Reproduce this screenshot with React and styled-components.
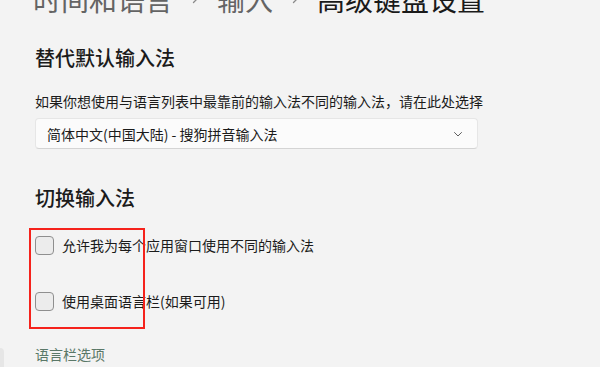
import styled, { createGlobalStyle } from 'styled-components';

const GlobalStyle = createGlobalStyle`
  html, body {
    margin: 0;
    padding: 0;
    background: #f3f3f3;
  }
  body {
    font-family: "Noto Sans CJK SC", "Noto Sans", sans-serif;
    color: #1b1b1b;
    overflow: hidden;
  }
`;

const Page = styled.div`
  position: relative;
  width: 600px;
  height: 367px;
  box-sizing: border-box;
  padding-left: 35px;
  overflow: hidden;
  display: flex;
  flex-direction: column;
  align-items: flex-start;
`;

const Breadcrumb = styled.div`
  display: flex;
  align-items: center;
  margin: -15px 0 0 -2px;
  height: 28px;
  font-size: 28px;
  line-height: 28px;
  white-space: nowrap;
`;

const Crumb = styled.span`
  color: ${(props) => (props.current ? '#1a1a1a' : '#646464')};
`;

const Sep = styled.span`
  width: 44px;
  display: flex;
  justify-content: center;
  align-items: center;
`;

const SectionTitle = styled.h2`
  margin: ${(props) => props.top}px 0 0 0;
  font-size: 20px;
  line-height: 28px;
  font-weight: 500;
  color: #1b1b1b;
`;

const Description = styled.p`
  margin: 19px 0 0 0;
  font-size: 14px;
  line-height: 20px;
  color: #1b1b1b;
`;

const Select = styled.div`
  margin-top: 7px;
  width: 443px;
  height: 31px;
  box-sizing: border-box;
  padding: 0 14px 0 11px;
  display: flex;
  align-items: center;
  justify-content: space-between;
  background: #fbfbfb;
  border: 1px solid #e6e6e6;
  border-bottom-color: #d4d4d4;
  border-radius: 4px;
  font-size: 14px;
  color: #1b1b1b;
`;

const CheckGroup = styled.div`
  position: relative;
  margin-top: 23px;
  display: flex;
  flex-direction: column;
  gap: 36px;
`;

const Highlight = styled.div`
  position: absolute;
  left: -6px;
  top: -7px;
  width: 116px;
  height: 101px;
  border: 2px solid #f5221b;
  box-sizing: border-box;
  pointer-events: none;
`;

const CheckRow = styled.label`
  display: flex;
  align-items: center;
  gap: 8px;
  height: 20px;
  font-size: 14px;
  line-height: 20px;
  color: #1b1b1b;
`;

const Box = styled.span`
  width: 19px;
  height: 19px;
  box-sizing: border-box;
  border: 1px solid #8f8f8f;
  border-radius: 4px;
  background: #ececec;
  flex-shrink: 0;
`;

const Link = styled.a`
  margin-top: 33px;
  font-size: 14px;
  line-height: 20px;
  color: #5a7868;
  text-decoration: none;
`;

const EdgeTab = styled.div`
  position: absolute;
  left: -4px;
  top: 348px;
  width: 8px;
  height: 30px;
  border-radius: 4px;
  background: #e6e6e6;
`;

const Chevron = ({ size = 12, color = '#8a8a8a', width = 1.3 }) => (
  <svg width={size} height={size} viewBox="0 0 12 12" fill="none">
    <path d="M4.5 2.5 L8 6 L4.5 9.5" stroke={color} strokeWidth={width} strokeLinecap="round" strokeLinejoin="round" />
  </svg>
);

const ChevronDown = () => (
  <svg width="10" height="10" viewBox="0 0 10 10" fill="none">
    <path d="M1.5 3.5 L5 7 L8.5 3.5" stroke="#5f5f5f" strokeWidth="1" strokeLinecap="round" strokeLinejoin="round" />
  </svg>
);

export default function App() {
  return (
    <>
      <GlobalStyle />
      <Page>
        <Breadcrumb>
          <Crumb>时间和语言</Crumb>
          <Sep><Chevron /></Sep>
          <Crumb>输入</Crumb>
          <Sep><Chevron /></Sep>
          <Crumb current>高级键盘设置</Crumb>
        </Breadcrumb>

        <SectionTitle top={31}>替代默认输入法</SectionTitle>
        <Description>如果你想使用与语言列表中最靠前的输入法不同的输入法，请在此处选择</Description>
        <Select>
          <span>简体中文(中国大陆) - 搜狗拼音输入法</span>
          <ChevronDown />
        </Select>

        <SectionTitle top={35}>切换输入法</SectionTitle>
        <CheckGroup>
          <CheckRow><Box />允许我为每个应用窗口使用不同的输入法</CheckRow>
          <CheckRow><Box />使用桌面语言栏(如果可用)</CheckRow>
          <Highlight />
        </CheckGroup>

        <Link href="#">语言栏选项</Link>
        <EdgeTab />
      </Page>
    </>
  );
}
